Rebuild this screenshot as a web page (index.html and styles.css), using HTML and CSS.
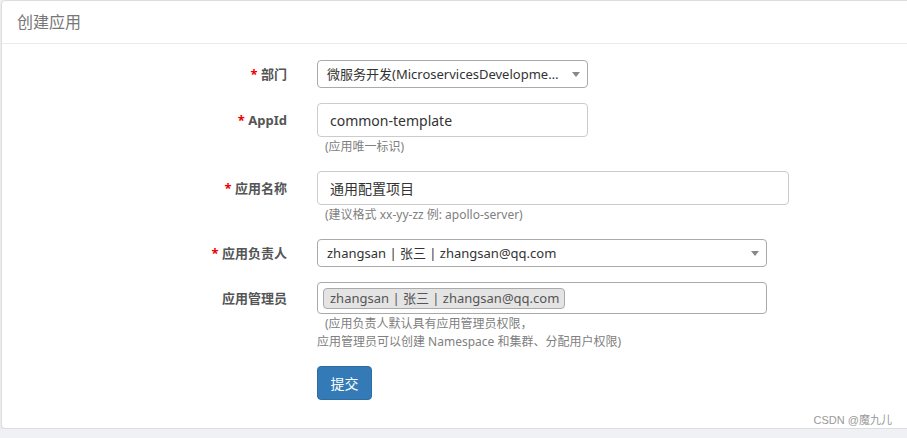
FILE: index.html
```html
<!DOCTYPE html>
<html lang="zh-CN">
<head>
  <meta charset="UTF-8">
  <meta name="viewport" content="width=device-width, initial-scale=1.0">
  <title>创建应用</title>
  <link rel="stylesheet" href="styles.css">
</head>
<body>
  <div class="panel">
    <div class="panel-heading">创建应用</div>
    <div class="panel-body">
      <form class="form">
        <div class="form-group">
          <label class="control-label"><span class="required">*</span> 部门</label>
          <div class="control">
            <div class="select select-short">
              <span class="select-text">微服务开发(MicroservicesDevelopment)</span>
              <span class="select-arrow"></span>
            </div>
          </div>
        </div>
        <div class="form-group">
          <label class="control-label label-tall"><span class="required">*</span> AppId</label>
          <div class="control">
            <input class="input input-short" type="text" value="common-template">
            <div class="help-block">(应用唯一标识)</div>
          </div>
        </div>
        <div class="form-group">
          <label class="control-label label-tall"><span class="required">*</span> 应用名称</label>
          <div class="control">
            <input class="input input-long" type="text" value="通用配置项目">
            <div class="help-block">(建议格式 xx-yy-zz 例: apollo-server)</div>
          </div>
        </div>
        <div class="form-group">
          <label class="control-label"><span class="required">*</span> 应用负责人</label>
          <div class="control">
            <div class="select select-mid">
              <span class="select-text">zhangsan | 张三 | zhangsan@qq.com</span>
              <span class="select-arrow"></span>
            </div>
          </div>
        </div>
        <div class="form-group">
          <label class="control-label label-multi">应用管理员</label>
          <div class="control">
            <div class="multi-select">
              <span class="tag">zhangsan | 张三 | zhangsan@qq.com</span>
            </div>
            <div class="help-block">(应用负责人默认具有应用管理员权限，<br>应用管理员可以创建 Namespace 和集群、分配用户权限)</div>
          </div>
        </div>
        <div class="form-group">
          <div class="control-label"></div>
          <div class="control">
            <button type="button" class="btn-primary">提交</button>
          </div>
        </div>
      </form>
    </div>
    <div class="watermark">CSDN @魔九儿</div>
  </div>
</body>
</html>
```

FILE: styles.css
```css
body {
  margin: 0;
  padding: 0;
  background-color: #f0f1f5;
  font-family: "Noto Sans", "Noto Sans CJK SC", sans-serif;
  font-size: 14px;
  color: #333;
}
.panel {
  position: relative;
  height: 427px;
  margin: 0 -10px 0 1px;
  background: #fff;
  border: 1px solid #ddd;
  border-radius: 4px;
  box-shadow: 0 1px 2px rgba(0, 0, 0, 0.08);
}
.panel-heading {
  height: 42px;
  line-height: 42px;
  padding-left: 15px;
  font-size: 16px;
  color: #777;
  border-bottom: 1px solid #eaeaef;
}
.panel-body {
  padding-top: 16px;
}
.form-group {
  display: flex;
  align-items: flex-start;
  margin-bottom: 15px;
}
.control-label {
  width: 285px;
  flex: none;
  margin-right: 30px;
  text-align: right;
  font-size: 13px;
  font-weight: bold;
  color: #555;
  line-height: 28px;
}
.label-tall {
  line-height: 34px;
}
.label-multi {
  line-height: 32px;
}
.required {
  color: #e00;
}
.control {
  flex: 1;
}
.select {
  position: relative;
  box-sizing: border-box;
  height: 28px;
  padding: 0 24px 0 9px;
  border: 1px solid #aaa;
  border-radius: 4px;
  font-size: 13px;
  line-height: 26px;
  background: #fff;
}
.select-short {
  width: 271px;
}
.select-mid {
  width: 450px;
}
.select-text {
  display: block;
  overflow: hidden;
  white-space: nowrap;
  text-overflow: ellipsis;
}
.select-arrow {
  position: absolute;
  right: 7px;
  top: 11px;
  border-left: 4px solid transparent;
  border-right: 4px solid transparent;
  border-top: 5px solid #888;
}
.input {
  box-sizing: border-box;
  display: block;
  height: 34px;
  padding: 0 12px;
  border: 1px solid #ccc;
  border-radius: 4px;
  font-family: inherit;
  font-size: 14px;
  color: #333;
}
.input-short {
  width: 271px;
}
.input-long {
  width: 472px;
}
.multi-select {
  box-sizing: border-box;
  width: 450px;
  height: 32px;
  padding: 5px 5px;
  border: 1px solid #aaa;
  border-radius: 4px;
}
.tag {
  display: inline-block;
  box-sizing: border-box;
  height: 21px;
  padding: 0 5px 0 6px;
  font-size: 13px;
  line-height: 19px;
  background: #e4e4e4;
  border: 1px solid #aaa;
  border-radius: 4px;
  color: #555;
}
.help-block {
  margin-top: 1px;
  font-size: 12px;
  line-height: 18px;
  color: #808080;
  text-indent: 8px;
}
.btn-primary {
  width: 55px;
  height: 34px;
  padding: 0;
  background: #337ab7;
  border: 1px solid #2e6da4;
  border-radius: 4px;
  color: #fff;
  font-family: inherit;
  font-size: 14px;
}
.watermark {
  position: absolute;
  right: 24px;
  bottom: 1px;
  font-family: "Liberation Sans", "Noto Sans CJK SC", sans-serif;
  font-size: 11px;
  color: #999;
}
```
